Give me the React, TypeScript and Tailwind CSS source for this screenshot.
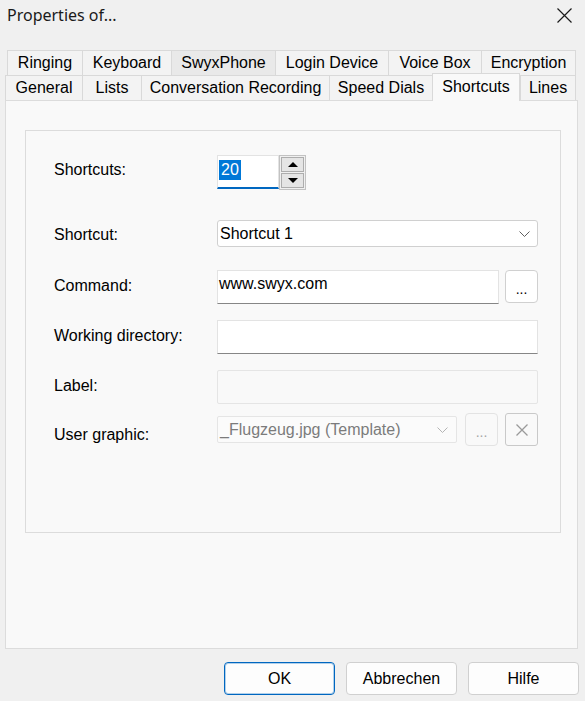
import type { ReactNode } from "react";

type Tab = { label: string; width: string; active?: boolean; hover?: boolean };

const topTabs: Tab[] = [
  { label: "Ringing", width: "w-[75px]" },
  { label: "Keyboard", width: "w-[89px]" },
  { label: "SwyxPhone", width: "w-[104px]", hover: true },
  { label: "Login Device", width: "w-[113px]" },
  { label: "Voice Box", width: "w-[93px]" },
  { label: "Encryption", width: "w-[95px]" },
];

const bottomTabs: Tab[] = [
  { label: "General", width: "w-[77px]" },
  { label: "Lists", width: "w-[59px]" },
  { label: "Conversation Recording", width: "w-[188px]" },
  { label: "Speed Dials", width: "w-[103px]" },
  { label: "Shortcuts", width: "w-[88px]", active: true },
  { label: "Lines", width: "w-[56px]" },
];

function TabButton({ tab, last }: { tab: Tab; last: boolean }) {
  if (tab.active) {
    return (
      <div
        className={`${tab.width} relative z-10 -mb-px flex h-[28px] items-center justify-center border border-b-0 border-[#d9d9d9] bg-[#f9f9f9] pb-[2px]`}
      >
        {tab.label}
      </div>
    );
  }
  return (
    <div
      className={`${tab.width} flex h-[25px] items-center justify-center border-t border-l border-[#d9d9d9] ${
        last ? "border-r" : ""
      } ${tab.hover ? "bg-[#e9e9e9]" : "bg-[#f3f3f3]"}`}
    >
      {tab.label}
    </div>
  );
}

function Row({
  label,
  labelPad = "pt-[7px]",
  className,
  children,
}: {
  label: string;
  labelPad?: string;
  className: string;
  children: ReactNode;
}) {
  return (
    <div className={`flex items-start ${className}`}>
      <div className={`w-[163px] shrink-0 leading-[18px] ${labelPad}`}>{label}</div>
      {children}
    </div>
  );
}

function Chevron({ color }: { color: string }) {
  return (
    <svg width="11" height="6" viewBox="0 0 11 6" fill="none" className="shrink-0">
      <path d="M0.5 0.5 L5.5 5.5 L10.5 0.5" stroke={color} strokeWidth="1" />
    </svg>
  );
}

function SmallButton({ disabled, children }: { disabled?: boolean; children: ReactNode }) {
  return (
    <div
      className={`flex h-[33px] w-[33px] items-center justify-center rounded-[4px] border ${
        disabled ? "border-[#e3e3e3] bg-[#f9f9f9] text-[#a6a6a6]" : "border-[#d0d0d0] bg-white text-black"
      }`}
    >
      {children}
    </div>
  );
}

export default function App() {
  return (
    <div className="flex h-[701px] w-[585px] flex-col bg-[#f0f0f0] font-['Liberation_Sans',Arial,sans-serif] text-[16px] text-black">
      {/* title bar */}
      <div className="flex h-[50px] items-start justify-between">
        <div className="pl-[7px] pt-[4px] font-['Noto_Sans',sans-serif] text-[16px] leading-[22px] text-[#1a1a1a]">
          Properties of...
        </div>
        <svg width="15" height="15" viewBox="0 0 15 15" className="mr-[13px] mt-[8px]">
          <path d="M0.5 0.5 L14.5 14.5 M14.5 0.5 L0.5 14.5" stroke="#1a1a1a" strokeWidth="1.2" />
        </svg>
      </div>

      {/* tabs */}
      <div className="flex pl-[7px]">
        {topTabs.map((t, i) => (
          <TabButton key={t.label} tab={t} last={i === topTabs.length - 1} />
        ))}
      </div>
      <div className="flex h-[25px] items-end pl-[5px]">
        {bottomTabs.map((t, i) => (
          <TabButton key={t.label} tab={t} last={i === bottomTabs.length - 1} />
        ))}
      </div>

      {/* page */}
      <div className="ml-[5px] h-[549px] w-[573px] border border-[#dcdcdc] bg-[#f9f9f9] pl-[19px] pt-[29px]">
        <div className="flex h-[403px] w-[536px] flex-col border border-[#dcdcdc] pl-[28px] pt-[24px]">
          <Row label="Shortcuts:" className="h-[34px]" labelPad="pt-[6px]">
            <div className="flex">
              <div className="h-[34px] w-[62px] border border-b-2 border-[#e3e3e3] border-b-[#0067c0] bg-white pl-[1px] pt-[2px]">
                <span className="inline-block h-[20px] bg-[#0078d7] px-[2px] leading-[20px] text-white">20</span>
              </div>
              <div className="flex h-[35px] w-[27px] flex-col gap-px border border-[#c2c2c2] bg-[#f0f0f0] p-px">
                <div className="flex flex-1 items-center justify-center border border-[#adadad] bg-[#e5e5e5]">
                  <svg width="10" height="5" viewBox="0 0 10 5">
                    <polygon points="0,5 10,5 5,0" fill="#000" />
                  </svg>
                </div>
                <div className="flex flex-1 items-center justify-center border border-[#adadad] bg-[#e5e5e5]">
                  <svg width="10" height="5" viewBox="0 0 10 5">
                    <polygon points="0,0 10,0 5,5" fill="#000" />
                  </svg>
                </div>
              </div>
            </div>
          </Row>

          <Row label="Shortcut:" className="mt-[31px] h-[27px]" labelPad="pt-[6px]">
            <div className="flex h-[27px] w-[321px] items-center justify-between rounded-[3px] border border-[#d0d0d0] bg-white pl-[2px] pr-[7px]">
              <span>Shortcut 1</span>
              <Chevron color="#5f5f5f" />
            </div>
          </Row>

          <Row label="Command:" className="mt-[23px] h-[34px]">
            <div className="flex gap-[6px]">
              <div className="h-[34px] w-[282px] border border-[#e3e3e3] border-b-[#868686] bg-white pl-[1px] pt-[3px] leading-[20px]">
                www.swyx.com
              </div>
              <SmallButton>
                <span className="pt-[6px] text-[14px]">...</span>
              </SmallButton>
            </div>
          </Row>

          <Row label="Working directory:" className="mt-[16px] h-[34px]">
            <div className="h-[34px] w-[321px] border border-[#e3e3e3] border-b-[#868686] bg-white" />
          </Row>

          <Row label="Label:" className="mt-[16px] h-[34px]">
            <div className="h-[34px] w-[321px] rounded-[2px] border border-[#e5e5e5] bg-[#f9f9f9]" />
          </Row>

          <Row label="User graphic:" className="mt-[9px] h-[33px]" labelPad="pt-[13px]">
            <div className="flex items-center">
              <div className="flex h-[27px] w-[240px] items-center justify-between rounded-[2px] border border-[#e5e5e5] bg-[#fbfbfb] pl-[2px] pr-[8px] text-[#7b7b7b]">
                <span>_Flugzeug.jpg (Template)</span>
                <Chevron color="#b4b4b4" />
              </div>
              <div className="ml-[8px]">
                <SmallButton disabled>
                  <span className="pt-[6px] text-[14px]">...</span>
                </SmallButton>
              </div>
              <div className="ml-[7px] flex h-[33px] w-[33px] items-center justify-center rounded-[3px] border border-[#c9c9c9] bg-[#f9f9f9]">
                <svg width="12" height="12" viewBox="0 0 12 12">
                  <path d="M0.5 0.5 L11.5 11.5 M11.5 0.5 L0.5 11.5" stroke="#9a9a9a" strokeWidth="1.3" />
                </svg>
              </div>
            </div>
          </Row>
        </div>
      </div>

      {/* dialog buttons */}
      <div className="mt-[13px] flex justify-end gap-[11px] pr-[6px]">
        <button className="h-[33px] w-[111px] rounded-[4px] border border-[#0067c0] bg-[#fdfdfd] outline outline-1 -outline-offset-2 outline-[#0067c0]/30">
          OK
        </button>
        <button className="h-[33px] w-[111px] rounded-[4px] border border-[#d0d0d0] bg-[#fdfdfd]">Abbrechen</button>
        <button className="h-[33px] w-[111px] rounded-[4px] border border-[#d0d0d0] bg-[#fdfdfd]">Hilfe</button>
      </div>
    </div>
  );
}
